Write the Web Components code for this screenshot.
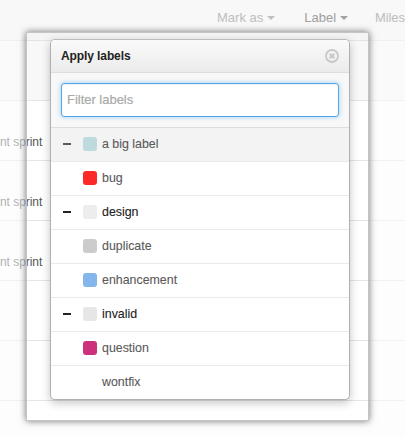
<!DOCTYPE html>
<html lang="en"><head><meta charset="utf-8"><title>Apply labels</title>
<style>
html,body{margin:0;width:405px;height:437px;overflow:hidden;background:#fff;font-family:"Liberation Sans",Arial,sans-serif}
</style></head><body>
<issues-page>
  <tool-item label="Mark as" style="--tone:#777"></tool-item>
  <tool-item label="Label" style="--tone:#333"></tool-item>
  <tool-item label="Miles" style="--tone:#777" plain></tool-item>
  <issue-row slot="rows"></issue-row>
  <issue-row slot="rows">nt sprint</issue-row>
  <issue-row slot="rows">nt sprint</issue-row>
  <issue-row slot="rows">nt sprint</issue-row>
  <issue-row slot="rows"></issue-row>
  <issue-row slot="rows"></issue-row>
  <issue-row slot="rows"></issue-row>
  <focus-frame slot="overlay"></focus-frame>
  <label-picker slot="overlay" heading="Apply labels">
    <label-row color="#bfdadd" marked active>a big label</label-row>
    <label-row color="#fc2929">bug</label-row>
    <label-row color="#ededed" marked selected>design</label-row>
    <label-row color="#cccccc">duplicate</label-row>
    <label-row color="#84b6eb">enhancement</label-row>
    <label-row color="#e6e6e6" marked selected>invalid</label-row>
    <label-row color="#cc317c">question</label-row>
    <label-row color="#ffffff">wontfix</label-row>
  </label-picker>
</issues-page>
<script>
function define(name, render){
  customElements.define(name, class extends HTMLElement{
    connectedCallback(){
      if(!this.shadowRoot) this.attachShadow({mode:'open'}).innerHTML = render(this);
    }
  });
}
define('issues-page', () => `<style>
:host{display:block;position:relative;width:405px;height:437px;overflow:hidden}
nav{display:flex;gap:29px;height:40px;padding-left:217px;background:#f4f4f4;border-bottom:1px solid #e3e3e3;width:300px}
main{display:block}
</style><nav><slot></slot></nav><main><slot name="rows"></slot></main><slot name="overlay"></slot>`);
define('tool-item', e => `<style>
:host{display:flex;align-items:center;gap:4px;height:35px;flex:none;color:var(--tone);font-size:13px;line-height:15px;white-space:nowrap;-webkit-text-stroke:.1px}
i{border:4px solid transparent;border-top-color:currentColor;border-bottom:0;margin-top:1px}
:host([plain]){margin-left:-2px;letter-spacing:-.1px}
:host([plain]) i{display:none}
</style><span>${e.getAttribute('label')}</span><i></i>`);
define('issue-row', () => `<style>
:host{display:flex;box-sizing:border-box;height:60px;border-bottom:1px solid #e5e5e5;width:405px;align-items:flex-end;padding-bottom:10px;color:#555;font-size:12px;line-height:16px;background:#fff}
:host(:first-of-type){background:#f8f8f8}
span{white-space:nowrap;letter-spacing:-.05px}
</style><span><slot></slot></span>`);
define('focus-frame', () => `<style>
:host{position:absolute;box-sizing:border-box;left:26px;top:32px;width:343px;height:389px;border:1px solid #c4c4c4;box-shadow:0 0 7px rgba(0,0,0,.55),0 0 0 500px rgba(252,252,252,.55)}
</style>`);
define('label-picker', e => `<style>
:host{position:absolute;box-sizing:border-box;left:50px;top:39px;width:300px;height:361px;border:1px solid #b0b0b0;border-top-color:#bbb;border-radius:5px;background:#fff;background-clip:padding-box;box-shadow:0 3px 10px rgba(0,0,0,.23)}
header{display:flex;align-items:center;justify-content:space-between;height:32px;padding:0 10px;border-bottom:1px solid #ddd;border-radius:4px 4px 0 0;background:linear-gradient(#fafafa,#ebebeb)}
b{font-size:12px;line-height:16px;color:#222;letter-spacing:-.1px}
svg{display:block}
.filter{display:flex;box-sizing:border-box;height:55px;padding:10px;background:#f8f8f8;border-bottom:1px solid #ddd}
.field{flex:1;display:flex;align-items:center;box-sizing:border-box;height:34px;padding:0 5px;border:1px solid #51a7e8;border-radius:3px;background:#fff;color:#a9a9a9;font-size:13px;line-height:16px;-webkit-text-stroke:.2px;box-shadow:inset 0 1px 2px rgba(0,0,0,.07),0 0 5px rgba(81,167,232,.5)}
.field span{letter-spacing:-.02px}
.list{border-radius:0 0 4px 4px;overflow:hidden}
</style><header><b>${e.getAttribute('heading')}</b>
<svg width="14" height="14" viewBox="0 0 14 14" fill="none" stroke="#c8c8c8"><circle cx="7" cy="7" r="6" stroke-width="1.8"/><path d="M4.7 4.7 9.3 9.3M9.3 4.7 4.7 9.3" stroke-width="2"/></svg></header>
<div class="filter"><div class="field"><span>Filter labels</span></div></div><div class="list"><slot></slot></div>`);
define('label-row', e => `<style>
:host{display:flex;align-items:center;box-sizing:border-box;height:34px;padding:0 0 1px 12px;border-bottom:1px solid #eaeaea;color:#5a5a5a;font-size:12.4px;line-height:16px;-webkit-text-stroke:.1px}
:host([active]){background:#f3f3f3}
:host([selected]){color:#222}
:host(:last-of-type){border-bottom:0;height:33px}
u{width:8px;height:2px;margin-right:12px}
:host([marked]) u{background:currentColor}
i{width:14px;height:14px;border-radius:3px;margin-right:5px;background:${e.getAttribute('color')}}
</style><u></u><i></i><span><slot></slot></span>`);
</script></body></html>
